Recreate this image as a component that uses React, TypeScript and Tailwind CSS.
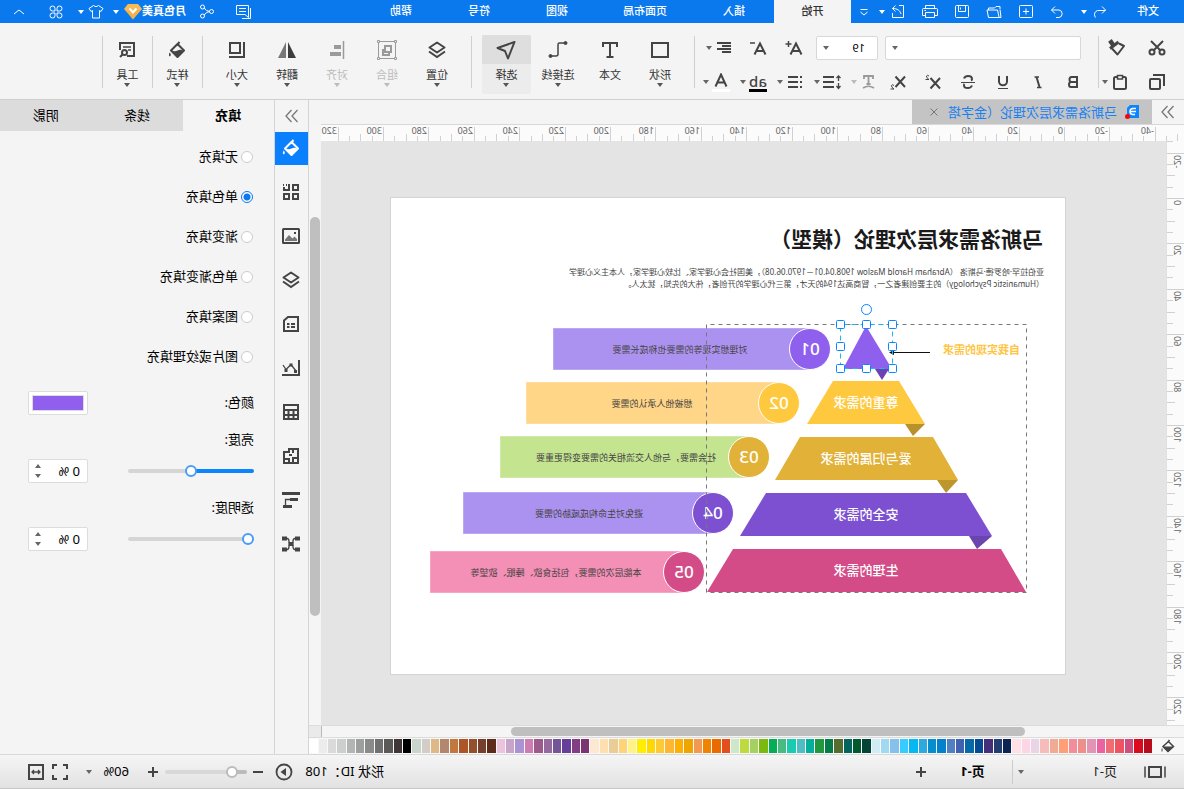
import { useState } from 'react';
import type { ReactNode } from 'react';
import clsx from 'clsx';

const SWATCHES = [
  '#b80c1c', '#d90b1d', '#cb4f7f', '#ec5463', '#ef6c73', '#ec619f', '#e294b5', '#ef8f8a', '#f38c9b', '#ff9f78',
  '#efab93', '#f6bcba', '#ead5e7', '#fdd6e6', '#ffe0e6', '#0d2351', '#233d70', '#452f7a', '#064a92', '#0669a8',
  '#4062b0', '#5180c2', '#0381cc', '#048ecd', '#2eaae0', '#05b8f2', '#38cbff', '#86c1ec', '#a1daf0', '#d1ecf5',
  '#054538', '#03592f', '#04655f', '#556e30', '#047c4a', '#1f9840', '#04b09c', '#4fbdc1', '#1bcbb1', '#48bc80',
  '#04ae54', '#7cb90f', '#a4d162', '#bfda3f', '#cce8c9', '#e34e1d', '#eb6a00', '#f08400', '#f39853', '#f0a400',
  '#ffaf00', '#ffb733', '#fcca32', '#ffd800', '#ffee00', '#fdf388', '#ffd478', '#eacc97', '#ffdfae', '#fde9d2',
  '#7d3472', '#823d83', '#653f98', '#745598', '#966a9f', '#9d5b8b', '#cd7db1', '#ab93d1', '#c6a6c8', '#ecc2dc',
  '#5c2b19', '#773f30', '#94502b', '#ae5528', '#c1783f', '#b3866e', '#dfb885', '#d4ccc6', '#c9d4cc', '#000000',
  '#3f3737', '#5b5858', '#707070', '#8a8a8a', '#9c9f9d', '#b2b5b3', '#cccfcd', '#dadada', '#ececec', '#ffffff',
];

const FILL_TYPES = ['无填充', '单色填充', '渐变填充', '单色渐变填充', '图案填充', '图片或纹理填充'];

const LEVELS = [
  { shape: '199,128 173,171 222,171', fold: '176,171 190,171 183,182', color: '#8f5fee', foldColor: '#6c42b0', label: '', y: 0 },
  { shape: '166,183 232,183 258,226 140,226', fold: '140,226 160,226 152,238', color: '#ffc93f', foldColor: '#b8912c', label: '尊重的需求', y: 204 },
  { shape: '132,239 265,239 290,282 107,282', fold: '107,282 128,282 119,295', color: '#e2b137', foldColor: '#be962e', label: '爱与归属的需求', y: 260 },
  { shape: '99,295 299,295 325,338 73,338', fold: '73,338 96,338 88,351', color: '#7c50d1', foldColor: '#6b45ae', label: '安全的需求', y: 316 },
  { shape: '64,351 332,351 358,394 39,394', fold: '', color: '#d34c87', foldColor: '', label: '生理的需求', y: 372 },
];

const BARS = [
  { no: '01', x: 255, end: 512, y: 130, bar: '#ac92f0', dot: '#8f5fee', text: '对理想实现等的需要也称成长需要', tx: 385 },
  { no: '02', x: 286, end: 539, y: 184, bar: '#ffd587', dot: '#ffc93f', text: '想被他人承认的需要', tx: 413 },
  { no: '03', x: 316, end: 565, y: 238, bar: '#c4e490', dot: '#e2b137', text: '社会需要，与他人交流相关的需要变得更重要', tx: 439 },
  { no: '04', x: 352, end: 602, y: 294, bar: '#ac92f0', dot: '#7c50d1', text: '避免对生命构成威胁的需要', tx: 476 },
  { no: '05', x: 381, end: 635, y: 353, bar: '#f48fb5', dot: '#d34c87', text: '本能层次的需要，包括食欲、睡眠、欲望等', tx: 509 },
];

const HANDLES = [
  [172, 126], [198, 126], [224, 126],
  [172, 148], [224, 148],
  [172, 170], [198, 170], [224, 170],
];

function Icon({ size = 18, w = 1, className, children }: { size?: number; w?: number; className?: string; children: ReactNode }) {
  return (
    <svg
      width={size}
      height={size}
      viewBox={`0 0 ${size} ${size}`}
      fill="none"
      stroke="currentColor"
      strokeWidth={w}
      className={clsx('shrink-0', className)}
      aria-hidden="true"
    >
      {children}
    </svg>
  );
}

function Caret({ className = 'text-[#666]' }: { className?: string }) {
  return (
    <svg width="6" height="4" viewBox="0 0 6 4" className={clsx('shrink-0', className)} aria-hidden="true">
      <path d="M0 0h6L3 4z" fill="currentColor" />
    </svg>
  );
}

const BucketShape = () => (
  <>
    <path d="M6.500 1L9.500 4.500M2 9.500L8.500 3L15 9.500L8.500 16z" strokeLinejoin="round" />
    <path d="M3 9.500Q6 8 8.500 9.500T14 9.500L8.500 15.500z" fill="currentColor" stroke="none" />
    <path d="M16.200 11.500q2 2.500 0 4q-2-1.500 0-4" fill="currentColor" stroke="none" />
  </>
);

const LayersShape = () => (
  <>
    <path d="M9 1.500L16.500 6.500L9 11.500L1.500 6.500z" strokeLinejoin="round" />
    <path d="M1 10.500L9 16L17 10.500" />
  </>
);

/* ---------- top menu ---------- */

function MenuBar() {
  const menus = ['视图', '符号', '帮助'];
  return (
    <header className="flex h-[23px] shrink-0 items-stretch bg-[#0b79ee] text-[11px] font-medium text-white">
      <button className="w-[72px]">文件</button>
      <button className="flex w-6 items-center justify-center" aria-label="撤销">
        <Icon size={14}><path d="M5 1.500L1.500 5L5 8.500M1.500 5.500H8a4 4 0 0 1 4.500 4q0 1.500-1 3" /></Icon>
      </button>
      <button className="flex w-2 items-center justify-center" aria-label="撤销历史"><Caret className="text-white" /></button>
      <button className="ml-2 flex w-[30px] items-center justify-center" aria-label="恢复">
        <Icon size={14}><path d="M9 1.500L12.500 5L9 8.500M12.500 5H5a3.800 3.800 0 0 0 0 7.500H8" /></Icon>
      </button>
      <button className="flex w-8 items-center justify-center" aria-label="新建">
        <Icon size={14}><rect x="0.5" y="0.5" width="13" height="12" rx="1" /><path d="M7 3.500v6M4 6.500h6" /></Icon>
      </button>
      <button className="flex w-8 items-center justify-center" aria-label="打开">
        <Icon size={16}><path d="M2 5V2.500H6L7.500 4H13.500V6M2 5.500L1 13.500H13.500L15 6H4.500L3 13" /></Icon>
      </button>
      <button className="flex w-8 items-center justify-center" aria-label="保存">
        <Icon size={14}><rect x="0.5" y="0.5" width="13" height="12" rx="1" /><path d="M3.500 0.500V6.500H10.500V0.500M8.500 2.500v2" /></Icon>
      </button>
      <button className="flex w-8 items-center justify-center" aria-label="打印">
        <Icon size={16}><path d="M3.500 4.500V1.500H12.500V4.500M3.500 11.500H0.500V5.500Q0.500 4.500 1.500 4.500H14.500Q15.500 4.500 15.500 5.500V11.500H12.500M3.500 8.500H12.500V13.500H3.500zM12 6.500h1.500" /></Icon>
      </button>
      <button className="flex w-8 items-center justify-center" aria-label="导出">
        <Icon size={14}><path d="M6 0.500H1.500V12.500H12.500V8M4 9C5 5.500 7.500 3.500 12.500 3.500M9.500 0.500L12.500 3.500L9.500 6.500" /></Icon>
      </button>
      <button className="-ml-1 flex w-2 items-center justify-center" aria-label="导出选项"><Caret className="text-white" /></button>
      <button className="flex w-[27px] items-center justify-center" aria-label="自定义快速访问">
        <Icon size={10}><path d="M1.500 2.500h7M1.500 5L5 8L8.500 5" /></Icon>
      </button>
      <button className="w-[77px] bg-[#f4f4f4] text-[#333]">开始</button>
      <button className="w-20">插入</button>
      <button className="w-[98px]">页面布局</button>
      {menus.map((m) => (
        <button key={m} className="w-[78px]">{m}</button>
      ))}

      <div className="ml-auto flex items-center">
        <button className="flex w-[30px] justify-center" aria-label="评论">
          <Icon size={16}><path d="M2.500 1.500H14.500V10.500H6L2.500 13.500zM5 4.500h7M5 7.500h7M.5 4V14.500H9" /></Icon>
        </button>
        <button className="flex w-[42px] justify-center" aria-label="分享">
          <Icon size={16}><circle cx="3.500" cy="7.500" r="2" /><circle cx="12.500" cy="3" r="2" /><circle cx="12.500" cy="12" r="2" /><path d="M5.500 7.500Q9 7 10.800 4M5.500 7.500Q9 8 10.800 11" /></Icon>
        </button>
        <span className="text-[11px] font-bold">月色真美</span>
        <svg width="18" height="17" viewBox="0 0 18 17" aria-hidden="true">
          <path d="M4 1H14L18 6L9 16.500L0 6z" fill="#f6b24a" />
          <path d="M4 1H14L18 6L9 9L0 6z" fill="#fdc768" opacity=".4" />
          <path d="M5.500 5.500L9 9.500L12.500 5.500" stroke="#fff" strokeWidth="2" fill="none" />
        </svg>
        <button className="flex w-4 justify-center" aria-label="账号菜单"><Caret className="text-white" /></button>
        <button className="ml-1 flex w-4 justify-center" aria-label="主题">
          <Icon size={16}><path d="M5.500 1.500Q8 4 10.500 1.500L15 4.500L13 7.500L11.500 6.500V14H4.500V6.500L3 7.500L1 4.500z" strokeLinejoin="round" /></Icon>
        </button>
        <button className="flex w-[14px] justify-center" aria-label="主题选项"><Caret className="text-white" /></button>
        <button className="flex w-9 justify-center" aria-label="应用">
          <Icon size={14}><path d="M6 6H3.500A2.500 2.500 0 1 1 6 3.500zM8 6V3.500A2.500 2.500 0 1 1 10.500 6zM6 8V10.500A2.500 2.500 0 1 1 3.500 8zM8 8H10.500A2.500 2.500 0 1 1 8 10.500z" /></Icon>
        </button>
        <button className="flex w-[38px] justify-center" aria-label="收起">
          <Icon size={12}><path d="M1 8L6 4L11 8" /></Icon>
        </button>
      </div>
    </header>
  );
}

/* ---------- ribbon ---------- */

const Divider = () => <div className="mt-[13px] h-[52px] w-px shrink-0 bg-[#cfcfcf]" />;

function SplitButton({ label, disabled, children }: { label: string; disabled?: boolean; children: ReactNode }) {
  return (
    <button className={clsx('flex w-[37px] shrink-0 items-center gap-1 pl-1', disabled && 'text-[#9a9a9a]')} aria-label={label} disabled={disabled}>
      <span className="flex w-4 shrink-0 justify-center">{children}</span>
      <Caret className={disabled ? 'text-[#bbb]' : 'text-[#666]'} />
    </button>
  );
}

function LargeButton({ label, width = 'w-[50px]', active, disabled, caret = true, children }: {
  label: string;
  width?: string;
  active?: boolean;
  disabled?: boolean;
  caret?: boolean;
  children: ReactNode;
}) {
  return (
    <button
      disabled={disabled}
      className={clsx('mt-3 flex h-[59px] shrink-0 flex-col items-center rounded-xs', width, active && 'bg-[#ececec]', disabled ? 'text-[#9a9a9a]' : 'text-[#444]')}
    >
      <span className={clsx('flex h-[29px] w-full items-center justify-center rounded-t-xs', active && 'bg-[#dedede]')}>{children}</span>
      <span className={clsx('mt-[3px] text-[11px] leading-4', disabled ? 'text-[#bbb]' : 'text-[#333]')}>{label}</span>
      {caret && <Caret className={disabled ? 'text-[#bbb]' : 'text-[#555]'} />}
    </button>
  );
}

function Ribbon() {
  return (
    <div className="flex h-[77px] shrink-0 items-start overflow-hidden border-b border-[#cfcfcf] bg-[#f4f4f4] text-[#444]">
      <div className="w-[85px] shrink-0 pt-2 pl-[18px]">
        <div className="flex h-[34px] items-center gap-[22px]">
          <button aria-label="剪切">
            <Icon size={18} w={2}><circle cx="4" cy="13" r="2.500" /><circle cx="14" cy="13" r="2.500" /><path d="M3 2L12.500 11.500M15 2L5.500 11.500" /></Icon>
          </button>
          <button aria-label="格式刷">
            <Icon size={18} w={2}>
              <path d="M12 5L14.500 1.500L16.500 3L14 6.500z" fill="currentColor" />
              <path d="M7.500 3L16 9.500" strokeWidth="3" />
              <path d="M7 4.500L2 7L8.500 15.500L14 9.500" strokeLinejoin="round" />
            </Icon>
          </button>
        </div>
        <div className="flex h-[34px] items-center gap-5">
          <button aria-label="复制">
            <Icon size={18} w={2}><rect x="6" y="6" width="10" height="10" rx="1" /><path d="M2 13V2H13" /></Icon>
          </button>
          <button className="flex items-center gap-1" aria-label="粘贴">
            <Icon size={16} w={2}><rect x="2" y="3" width="12" height="12" rx="1.500" /><path d="M5.500 1.500H10.500V5H5.500z" fill="#f4f4f4" strokeWidth="1.500" /></Icon>
            <Caret />
          </button>
        </div>
      </div>
      <Divider />

      <div className="w-[403px] shrink-0 pt-2">
        <div className="flex h-[34px] items-center pl-[17px]">
          <button className="flex h-6 w-[196px] items-center justify-end rounded-xs border border-[#d8d8d8] bg-white pr-[6px]" aria-label="字体"><Caret /></button>
          <button className="ml-[7px] flex h-6 w-[62px] items-center justify-between rounded-xs border border-[#d8d8d8] bg-white pr-[6px] pl-3 text-[11px] text-black" aria-label="字号">
            19<Caret />
          </button>
          <button className="ml-1 flex w-9 justify-center" aria-label="增大字号">
            <Icon size={18} w={2}><path d="M1.500 15.500L7 4.500L12.500 15.500M3.500 12H10.500" /><path d="M11.500 5h6M14.500 2v6" strokeWidth="1.500" /></Icon>
          </button>
          <button className="flex w-9 justify-center" aria-label="减小字号">
            <Icon size={18} w={2}><path d="M1.500 15.500L7 4.500L12.500 15.500M3.500 12H10.500" /><path d="M12 4h5" strokeWidth="1.500" /></Icon>
          </button>
          <div className="ml-1 flex">
            <SplitButton label="对齐方式">
              <Icon size={14} w={2}><path d="M0 2h14M0 5h9M0 8h14M0 11h9" /></Icon>
            </SplitButton>
          </div>
        </div>
        <div className="flex h-[34px] items-stretch pl-[7px]">
          <button className="flex w-[35px] items-center justify-center" aria-label="加粗">
            <Icon size={14} w={2}><path d="M3 2H8.500Q10.500 2 10.500 4.500T8.500 7H3M3 7H9Q11 7 11 9.500T9 12H3V1" /></Icon>
          </button>
          <button className="flex w-[35px] items-center justify-center" aria-label="倾斜">
            <Icon size={14} w={2}><path d="M6 2H10.500M3.500 12.500H8" strokeWidth="1.500" /><path d="M8.500 2L5.500 12" /></Icon>
          </button>
          <button className="flex w-[35px] items-center justify-center" aria-label="下划线">
            <Icon size={14} w={2}><path d="M3 1V6.500a4 3.800 0 0 0 8 0V1" /><path d="M2 13.500H12" strokeWidth="1" /></Icon>
          </button>
          <button className="flex w-[35px] items-center justify-center" aria-label="删除线">
            <Icon size={16} w={2}><path d="M12 4.500Q11 2 8 2Q4 2 4 5Q4 6 5 6.500M4 11.500Q5 14 8 14Q12 14 12 11.500Q12 10.500 11.500 10" /><path d="M1 8.500H15" strokeWidth="1" /></Icon>
          </button>
          <button className="flex w-[35px] items-center justify-center" aria-label="上标">
            <Icon size={18} w={2}><path d="M2 5L11.500 15.500M11.500 5L2 15.500" /><path d="M13 3Q14.500 1.500 15.500 3Q16 4.500 13 6.500H16.500" strokeWidth="1" /></Icon>
          </button>
          <button className="flex w-[35px] items-center justify-center" aria-label="下标">
            <Icon size={18} w={2}><path d="M2 3.500L11.500 14M11.500 3.500L2 14" /><path d="M13 12.500Q14.500 11 15.500 12.500Q16 14 13 16H16.500" strokeWidth="1" /></Icon>
          </button>
          <SplitButton label="文本效果" disabled>
            <Icon size={14} w={2}><path d="M3 4V1H12V4M7.500 1V9M5.500 9H9.500" strokeWidth="1.800" /><path d="M2 13Q7.500 9.500 13 13" strokeWidth="1.500" /></Icon>
          </SplitButton>
          <SplitButton label="行距">
            <Icon size={18} w={2}><path d="M7 4H18M7 9H18M7 14H18" /><path d="M2.500 3V8M0.500 5L2.500 3L4.500 5M2.500 10V15.500M0.500 13L2.500 15.500L4.500 13" strokeWidth="1.300" /></Icon>
          </SplitButton>
          <SplitButton label="项目符号">
            <Icon size={14} w={2}><path d="M4 2H14M4 7H14M4 12H14" /><path d="M0 2h2M0 7h2M0 12h2" /></Icon>
          </SplitButton>
          <SplitButton label="突出显示">
            <span className="flex w-[18px] shrink-0 flex-col items-center border-b-[3px] border-black text-[15px] leading-4 font-medium">ab</span>
          </SplitButton>
          <SplitButton label="字体颜色">
            <span className="flex w-[18px] shrink-0 flex-col items-center border-b-[3px] border-white">
              <Icon size={16} w={2}><path d="M2.500 13.500L8 1.500L13.500 13.500M4.500 9.500H11.500" /></Icon>
            </span>
          </SplitButton>
        </div>
      </div>
      <Divider />

      <div className="flex pr-[10px] pl-[9px]">
        <LargeButton label="形状"><Icon size={20} w={2}><rect x="2" y="3" width="16" height="14" /></Icon></LargeButton>
        <LargeButton label="文本" caret={false}>
          <Icon size={18} w={2}><path d="M2 6V2H16V6M9 2V16M5.500 16H12.500" /></Icon>
        </LargeButton>
        <LargeButton label="连接线" width="w-[54px]">
          <Icon size={20} w={2}>
            <path d="M3 3H8.500Q10 3 10 4.500V14Q10 16 12 16H17" strokeWidth="1.500" />
            <circle cx="2.500" cy="3" r="1.500" fill="currentColor" strokeWidth="1" />
            <circle cx="17.500" cy="16" r="1.500" fill="currentColor" strokeWidth="1" />
          </Icon>
        </LargeButton>
        <LargeButton label="选择" width="w-[49px]" active>
          <Icon size={20} w={2}><path d="M1.500 2L18.500 8L11 11L8 18.500z" strokeLinejoin="round" /></Icon>
        </LargeButton>
      </div>
      <Divider />

      <div className="flex px-[9px]">
        <LargeButton label="位置"><Icon size={18} w={2}><LayersShape /></Icon></LargeButton>
        <LargeButton label="组合" disabled>
          <Icon size={20}><path d="M1.500 1.500H18.500V18.500H1.500z" /><path d="M0.500 .5h2v2h-2zM17.500 .5h2v2h-2zM.5 17.500h2v2h-2zM17.500 17.500h2v2h-2z" fill="#f4f4f4" /><path d="M6 6H12V12H6zM14 9V15H8V13" strokeWidth="2" /></Icon>
        </LargeButton>
        <LargeButton label="对齐" disabled>
          <Icon size={18}><path d="M2.500 0V18" strokeWidth="1.500" /><path d="M5 6H12M5 13H16" strokeWidth="4" /></Icon>
        </LargeButton>
        <LargeButton label="翻转">
          <svg width="20" height="18" viewBox="0 0 20 18" aria-hidden="true"><path d="M9 1V17H1z" fill="#3c3c3c" /><path d="M11 1V17H19z" fill="#777" /></svg>
        </LargeButton>
        <LargeButton label="大小">
          <Icon size={18} w={2}><rect x="6" y="2" width="10" height="10" /><path d="M2 1V16H17" /></Icon>
        </LargeButton>
      </div>
      <Divider />
      <LargeButton label="样式" width="w-[49px]"><Icon size={17} w={2}><BucketShape /></Icon></LargeButton>
      <Divider />
      <LargeButton label="工具" width="w-[49px]">
        <Icon size={17} w={2}><path d="M9 15H2V2H16V9" /><path d="M5 6H13M5 9H8" strokeWidth="1.500" /><circle cx="11.500" cy="11.500" r="2.500" /><path d="M13.500 13.500L16 16" /></Icon>
      </LargeButton>
      <Divider />
    </div>
  );
}

/* ---------- canvas ---------- */

const PX_PER_MM = 2.27;

function range(from: number, to: number, step: number) {
  const out: number[] = [];
  for (let v = from; v <= to; v += step) out.push(v);
  return out;
}

function HorizontalRuler() {
  return (
    <svg className="h-[17px] w-full border-t border-[#d8d8d8] bg-[#fbfbfb]" aria-hidden="true">
      {range(-50, 320, 5).map((mm) => {
        const x = Math.round(119 + mm * PX_PER_MM);
        return <path key={mm} d={`M${x + 0.5} ${mm % 20 === 0 ? 2 : mm % 10 === 0 ? 9 : 11}V16`} stroke="#d0d0d0" />;
      })}
      {range(-40, 320, 20).map((mm) => (
        <text key={mm} x={Math.round(121 + mm * PX_PER_MM)} y="9" className="fill-[#666] text-[9px]">{mm}</text>
      ))}
    </svg>
  );
}

function VerticalRuler() {
  return (
    <svg className="h-full w-[18px] shrink-0 bg-[#fbfbfb]" aria-hidden="true">
      {range(-25, 230, 5).map((mm) => {
        const y = Math.round(57 + mm * PX_PER_MM);
        return <path key={mm} d={`M${mm % 20 === 0 ? 0 : mm % 10 === 0 ? 9 : 11} ${y + 0.5}H18`} stroke="#d0d0d0" />;
      })}
      {range(-20, 220, 20).map((mm) => {
        const y = Math.round(59 + mm * PX_PER_MM);
        return (
          <text key={mm} transform={`translate(10 ${y}) rotate(-90)`} textAnchor="end" className="fill-[#666] text-[9px]">{mm}</text>
        );
      })}
      <path d="M17.500 0V600" stroke="#e0e0e0" />
    </svg>
  );
}

function Pyramid() {
  return (
    <svg width="674" height="476" viewBox="0 0 674 476" className="absolute top-0 left-0">
      {BARS.map((b) => (
        <g key={b.no}>
          <rect x={b.x} y={b.y} width={b.end - b.x} height="42" fill={b.bar} stroke="#fff" strokeOpacity=".4" />
          <circle cx={b.x} cy={b.y + 21} r="20.500" fill={b.dot} stroke="#fff" />
          <text x={b.x} y={b.y + 27} textAnchor="middle" className="fill-white text-[17px] font-medium">{b.no}</text>
          <text x={b.tx} y={b.y + 25} textAnchor="middle" className="fill-[#444] text-[9px]">{b.text}</text>
        </g>
      ))}
      {LEVELS.map((l) => (
        <g key={l.shape}>
          <polygon points={l.shape} fill={l.color} />
          <polygon points={l.fold} fill={l.foldColor} />
          <text x="199" y={l.y + 5} textAnchor="middle" className="fill-white text-[13px] font-medium">{l.label}</text>
        </g>
      ))}
      <text x="45" y="156" className="fill-[#ffc440] text-[11px] font-bold">自我实现的需求</text>
      <path d="M135 154.500H172" stroke="#111" />
      <path d="M176 154.500L171 152V157z" fill="#111" />

      {/* group outline and selection handles */}
      <rect x="38.500" y="126.500" width="320" height="268" fill="none" stroke="#777" strokeDasharray="4 4" />
      <rect x="172.500" y="126.500" width="52" height="44" fill="none" stroke="#1fb6f5" strokeDasharray="5 4" />
      {HANDLES.map(([x, y]) => (
        <rect key={`${x}-${y}`} x={x - 3.5} y={y - 3.5} width="8" height="8" rx="1" fill="#fff" stroke="#0a84ff" />
      ))}
      <circle cx="198.500" cy="111.500" r="5" fill="#fff" stroke="#0a84ff" />
    </svg>
  );
}

function Sheet() {
  return (
    <div className="absolute top-[57px] left-[101px] h-[476px] w-[674px] bg-white outline outline-[#d4d4d4]">
      <h1 className="pt-[26px] pl-[22px] text-[21px] leading-[30px] font-bold whitespace-nowrap text-[#1a1a1a]">马斯洛需求层次理论（模型）</h1>
      <p className="pt-[12px] pl-[21px] text-[8px] leading-[12px] whitespace-nowrap text-[#444]">
        亚伯拉罕·哈罗德·马斯洛 （Abraham Harold Maslow 1908.04.01－1970.06.08），美国社会心理学家、比较心理学家，人本主义心理学
        <br />
        （Humanistic Psychology）的主要创建者之一，智商高达194的天才，第三代心理学的开创者，伟大的先知，犹太人。
      </p>
      <Pyramid />
    </div>
  );
}

function Workspace() {
  return (
    <main className="flex min-w-0 flex-1 flex-col">
      <div className="flex h-6 shrink-0 items-stretch bg-[#f4f4f4]">
        <button className="flex w-8 items-center justify-center text-[#777]" aria-label="展开">
          <Icon size={14}><path d="M1.500 1L7 7L1.500 13M7.500 1L13 7L7.500 13" strokeWidth="1.300" /></Icon>
        </button>
        <div className="flex w-[240px] items-center bg-[#c4c4c4] pl-3">
          <svg width="16" height="16" viewBox="0 0 16 16" className="shrink-0" aria-hidden="true">
            <path d="M1 1H10L13 4V14H1z" fill="#0a84ff" />
            <path d="M4 7.500H9.500M4 4.500H7Q10 4.500 10 7.500T7 10.500H5" stroke="#fff" strokeWidth="1.500" fill="none" />
            <circle cx="12.500" cy="12.500" r="2.500" fill="#fa0505" />
          </svg>
          <span className="ml-[7px] text-[13px] leading-6 whitespace-nowrap text-[#1a80f0]">马斯洛需求层次理论（金字塔</span>
          <button className="ml-[10px] text-[#777]" aria-label="关闭">
            <Icon size={8}><path d="M.5 .5L7.500 7.500M7.500 .5L.5 7.500" /></Icon>
          </button>
        </div>
      </div>

      <div className="flex min-h-0 flex-1">
        <div className="flex min-w-0 flex-1 flex-col">
          <HorizontalRuler />
          <div className="flex min-h-0 flex-1">
            <VerticalRuler />
            <div className="relative flex-1 overflow-hidden bg-[#e4e4e4]">
              <Sheet />
            </div>
          </div>
        </div>
        <div className="w-3 shrink-0 bg-[#f5f5f5] px-px pt-[93px]">
          <div className="h-[399px] rounded-full bg-[#bfbfbf]" />
        </div>
      </div>

      <div className="flex h-[13px] shrink-0 border-y border-[#dcdcdc] bg-[#f5f5f5]">
        <div className="flex-1 py-px pl-[159px]">
          <div className="h-[9px] w-[514px] rounded-full bg-[#bfbfbf]" />
        </div>
        <div className="w-[13px] border-l border-[#bbb] bg-[#eaeaea]" />
      </div>

      <div className="flex h-4 shrink-0 items-center bg-[#f8f8f8]">
        <span className="flex w-8 justify-center text-[#444]">
          <Icon size={14} w={1}>
            <path d="M5.500 1L7.500 3.500M1.500 7.500L6.500 2.500L12 7.500L7 12.500z" strokeWidth="1.500" />
            <path d="M2 8H12L7 12.500z" fill="currentColor" />
            <path d="M13 9.500v3" />
          </Icon>
        </span>
        <div className="flex h-[14px] flex-1 gap-px">
          {SWATCHES.map((c) => (
            <button key={c} className="flex-1" style={{ backgroundColor: c }} aria-label={c} />
          ))}
        </div>
      </div>
    </main>
  );
}

/* ---------- right side ---------- */

const SIDE_ICONS: { label: string; icon: ReactNode }[] = [
  { label: '符号库', icon: <path d="M2 2h5v5h-5zM11 1v6h5V4M13 2h1M16 2h1M2 11h5v5h-5zM11 11h5v5h-5z" /> },
  {
    label: '图片',
    icon: (
      <>
        <rect x="1" y="2" width="16" height="14" rx=".5" />
        <path d="M3 14V12L5.500 9.500L7.500 11.500L11 8L15 12.500V14z" fill="#777" stroke="none" />
        <path d="M4 5h2v2h-2z" fill="currentColor" stroke="none" />
      </>
    ),
  },
  { label: '图层', icon: <LayersShape /> },
  { label: '页面', icon: <path d="M2 2H12L16 5.500V16H2zM5 9H9M10.500 9H13M5 12H9M10.500 12H13" /> },
  {
    label: '图表',
    icon: (
      <>
        <path d="M1 1V16H18" />
        <path d="M4 12L9 5.500L14 10.500L17 6" strokeWidth="1.300" />
        <path d="M7.500 4.500h3v3h-3zM3 11h3v3h-3zM12.500 10h3v3h-3z" fill="currentColor" stroke="none" />
      </>
    ),
  },
  { label: '表格', icon: <path d="M2 2H16V16H2zM2 7H16M2 12H16M6.500 7V16M11.500 7V16" /> },
  { label: '平面图', icon: <path d="M2 2H11V5H16V16H2zM7 2V6M2 11H6M7 16V10M11 16V12H16M11 8H8" /> },
  {
    label: '甘特图',
    icon: (
      <>
        <path d="M0 2.500H18" strokeWidth="3" />
        <path d="M2 8.500H10M8 15.500H17" strokeWidth="3" />
        <path d="M10 8.500H14.500V14" strokeWidth="1.300" />
      </>
    ),
  },
  {
    label: '思维导图',
    icon: (
      <>
        <path d="M5 3.500Q7 3.500 7 6.500T9 9M13 3.500Q11 3.500 11 6.500T9 9M5 14.500Q7 14.500 7 11.500T9 9M13 14.500Q11 14.500 11 11.500T9 9" strokeWidth="1.300" />
        <path d="M0 3.500H5M13 3.500H18M0 14.500H5M13 14.500H18M6.500 9H11.500" strokeWidth="4" />
      </>
    ),
  },
];

function IconRail() {
  return (
    <nav className="flex w-[35px] shrink-0 flex-col items-center border-x border-[#d4d4d4] bg-[#f4f4f4] text-[#444]">
      <button className="flex h-8 w-full items-center pl-[9px] text-[#777]" aria-label="收起面板">
        <Icon size={14}><path d="M1.500 1L7 7L1.500 13M7.500 1L13 7L7.500 13" strokeWidth="1.300" /></Icon>
      </button>
      <button className="mb-[5px] flex h-[33px] w-full items-center bg-[#0a80ff] pl-2 text-white" aria-label="填充">
        <Icon size={19} w={2}><BucketShape /></Icon>
      </button>
      {SIDE_ICONS.map((s) => (
        <button key={s.label} className="flex h-11 w-full items-center pl-2" aria-label={s.label}>
          <Icon size={18} w={2}>{s.icon}</Icon>
        </button>
      ))}
    </nav>
  );
}

function Spinner({ label }: { label: string }) {
  return (
    <div className="flex h-6 w-[60px] items-center justify-between rounded-xs border border-[#dcdcdc] bg-white pr-[6px] pl-[7px]">
      <input aria-label={label} defaultValue="0 %" className="w-8 bg-transparent text-[13px] leading-5 outline-none" />
      <span className="flex flex-col gap-[6px]">
        <Caret className="rotate-180 text-[#666]" />
        <Caret />
      </span>
    </div>
  );
}

const rangeBase =
  'h-1 w-[126px] appearance-none rounded-full [&::-webkit-slider-thumb]:size-3 [&::-webkit-slider-thumb]:appearance-none [&::-webkit-slider-thumb]:rounded-full [&::-webkit-slider-thumb]:border-2 [&::-webkit-slider-thumb]:border-[#4a9cf5] [&::-webkit-slider-thumb]:bg-white';

function FillPanel() {
  const [fill, setFill] = useState('单色填充');
  return (
    <aside className="w-[274px] shrink-0 bg-[#f4f4f4] text-[13px] text-black">
      <div className="grid h-[31px] grid-cols-3 bg-[#dcdcdc]">
        <button className="bg-[#f4f4f4] font-bold">填充</button>
        <button>线条</button>
        <button>阴影</button>
      </div>
      <div className="flex flex-col pt-[6px] pl-[21px]">
        {FILL_TYPES.map((t) => (
          <label key={t} className="flex h-10 items-center gap-[3px]">
            <input
              type="radio"
              name="fill"
              checked={fill === t}
              onChange={() => setFill(t)}
              className="size-3 appearance-none rounded-full border border-[#ccc] bg-white checked:border-[#0a78ee] checked:bg-[radial-gradient(#0a78ee_3px,#fff_4px)]"
            />
            {t}
          </label>
        ))}
      </div>
      <div className="flex flex-col pt-[14px] pr-7 pl-5">
        <div className="flex h-6 items-center justify-between">
          <span>颜色:</span>
          <button className="h-6 w-[60px] rounded-xs border border-[#dcdcdc] bg-white p-[3px]" aria-label="颜色">
            <span className="block h-full border border-[#ddd] bg-[#915fee]" />
          </button>
        </div>
        <label htmlFor="brightness" className="mt-3 leading-6">亮度:</label>
        <div className="mt-2 flex items-center justify-between">
          <input id="brightness" type="range" defaultValue={50} className={clsx(rangeBase, 'bg-[linear-gradient(to_right,#0a84ff_50%,#d5d5d5_50%)]')} />
          <Spinner label="亮度值" />
        </div>
        <label htmlFor="opacity" className="mt-3 leading-6">透明度:</label>
        <div className="mt-2 flex items-center justify-between">
          <input id="opacity" type="range" defaultValue={0} className={clsx(rangeBase, 'bg-[#d5d5d5]')} />
          <Spinner label="透明度值" />
        </div>
      </div>
    </aside>
  );
}

/* ---------- status bar ---------- */

function StatusBar() {
  return (
    <footer className="flex h-[35px] shrink-0 items-center border-y border-t-[#d8d8d8] border-b-[#c8c8c8] bg-linear-to-b from-[#f5f5f5] to-[#e2e2e2] text-[13px] text-[#222]">
      <button className="flex w-[58px] justify-center text-[#444]" aria-label="页面视图">
        <Icon size={22} w={2}><rect x="5" y="6" width="12" height="10" /><path d="M1 5.500V16.500M21 5.500V16.500" strokeWidth="1.500" /></Icon>
      </button>
      <button className="flex w-[108px] items-center justify-between pl-[9px]">页-1<Caret /></button>
      <div className="ml-[5px] h-6 w-px bg-[#ccc]" />
      <button className="w-[79px] font-bold text-black">页-1</button>
      <button className="flex w-[23px] justify-center text-[#444]" aria-label="添加页面">
        <Icon size={10} w={2}><path d="M5 0V10M0 5H10" /></Icon>
      </button>

      <div className="ml-auto flex items-center pr-7 text-[#444]">
        <span className="w-[91px] text-black">形状 ID：108</span>
        <button aria-label="演示">
          <Icon size={18} w={2}><circle cx="9" cy="9" r="7.500" strokeWidth="1.800" /><path d="M7 5V13L12.500 9z" fill="currentColor" stroke="none" /></Icon>
        </button>
        <button className="ml-3" aria-label="缩小"><Icon size={10} w={2}><path d="M0 5H10" /></Icon></button>
        <input
          type="range"
          aria-label="缩放"
          defaultValue={13}
          className="ml-[6px] h-1 w-[82px] appearance-none rounded-full bg-[linear-gradient(to_right,#bbb_15%,#d8d8d8_15%)] [&::-webkit-slider-thumb]:size-3 [&::-webkit-slider-thumb]:appearance-none [&::-webkit-slider-thumb]:rounded-full [&::-webkit-slider-thumb]:border-2 [&::-webkit-slider-thumb]:border-[#bbb] [&::-webkit-slider-thumb]:bg-white"
        />
        <button className="ml-[7px]" aria-label="放大"><Icon size={10} w={2}><path d="M5 0V10M0 5H10" /></Icon></button>
        <button className="ml-[19px] flex w-[43px] items-center justify-between text-black">60%<Caret /></button>
        <button className="ml-[18px]" aria-label="全屏">
          <Icon size={16} w={2}><path d="M1 5V1H5M11 1H15V5M15 11V15H11M5 15H1V11" /></Icon>
        </button>
        <button className="ml-2" aria-label="适应宽度">
          <Icon size={16} w={2}><rect x="1" y="1" width="14" height="14" /><path d="M4 8H12M6 6L4 8L6 10M10 6L12 8L10 10" strokeWidth="1.300" /></Icon>
        </button>
      </div>
    </footer>
  );
}

export default function App() {
  return (
    <div className="flex h-screen w-full -scale-x-100 flex-col overflow-hidden bg-[#f4f4f4] font-['Noto_Sans','Noto_Sans_CJK_SC',sans-serif]">
      <MenuBar />
      <Ribbon />
      <div className="flex min-h-0 flex-1">
        <Workspace />
        <IconRail />
        <FillPanel />
      </div>
      <StatusBar />
    </div>
  );
}
